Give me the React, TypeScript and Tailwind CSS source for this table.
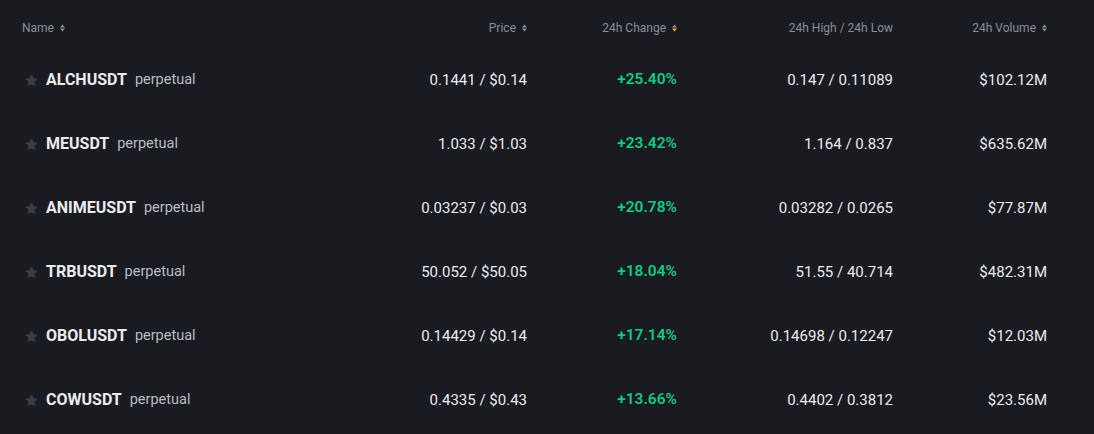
import { Star } from 'lucide-react'

type Row = {
  symbol: string
  price: string
  change: string
  highLow: string
  volume: string
}

const rows: Row[] = [
  { symbol: 'ALCHUSDT', price: '0.1441 / $0.14', change: '+25.40%', highLow: '0.147 / 0.11089', volume: '$102.12M' },
  { symbol: 'MEUSDT', price: '1.033 / $1.03', change: '+23.42%', highLow: '1.164 / 0.837', volume: '$635.62M' },
  { symbol: 'ANIMEUSDT', price: '0.03237 / $0.03', change: '+20.78%', highLow: '0.03282 / 0.0265', volume: '$77.87M' },
  { symbol: 'TRBUSDT', price: '50.052 / $50.05', change: '+18.04%', highLow: '51.55 / 40.714', volume: '$482.31M' },
  { symbol: 'OBOLUSDT', price: '0.14429 / $0.14', change: '+17.14%', highLow: '0.14698 / 0.12247', volume: '$12.03M' },
  { symbol: 'COWUSDT', price: '0.4335 / $0.43', change: '+13.66%', highLow: '0.4402 / 0.3812', volume: '$23.56M' },
]

// up/down carets; `active` paints the lower one yellow
function SortIcon({ active = false }: { active?: boolean }) {
  return (
    <svg width="7" height="12" viewBox="0 0 7 12" className="ml-[5px] shrink-0">
      <path d="M3.5 2.5 L6 5.5 H1 Z" fill="#848e9c" />
      <path d="M3.5 9.5 L6 6.5 H1 Z" fill={active ? '#f0b90b' : '#848e9c'} />
    </svg>
  )
}

const grid = 'grid grid-cols-[356px_150px_150px_215px_155px] pl-[22px]'

export default function App() {
  return (
    <div className="w-[1094px] h-[434px] bg-[#1a1b20] overflow-hidden font-['Roboto',sans-serif]">
      <div className={`${grid} h-12 pt-2 items-center text-xs text-[#848e9c]`}>
        <div className="flex items-center">
          Name
          <SortIcon />
        </div>
        <div className="flex items-center justify-end">
          Price
          <SortIcon />
        </div>
        <div className="flex items-center justify-end">
          24h Change
          <SortIcon active />
        </div>
        <div className="flex items-center justify-end">24h High / 24h Low</div>
        <div className="flex items-center justify-end">
          24h Volume
          <SortIcon />
        </div>
      </div>

      {rows.map((r) => (
        <div key={r.symbol} className={`${grid} h-16 items-center text-[15px] text-[#eaecef]`}>
          <div className="flex items-center">
            <Star size={13} className="ml-[3px] mr-[8px] fill-[#383c45] text-[#383c45]" strokeWidth={1.5} />
            <span className="font-bold text-base">{r.symbol}</span>
            <span className="ml-[8px] text-[14.5px] text-[#b7bdc6]">perpetual</span>
          </div>
          <div className="text-right pr-px">{r.price}</div>
          <div className="text-right pr-px font-semibold text-[15.5px] text-[#0ecb81]">{r.change}</div>
          <div className="text-right">{r.highLow}</div>
          <div className="text-right pr-px">{r.volume}</div>
        </div>
      ))}
    </div>
  )
}
